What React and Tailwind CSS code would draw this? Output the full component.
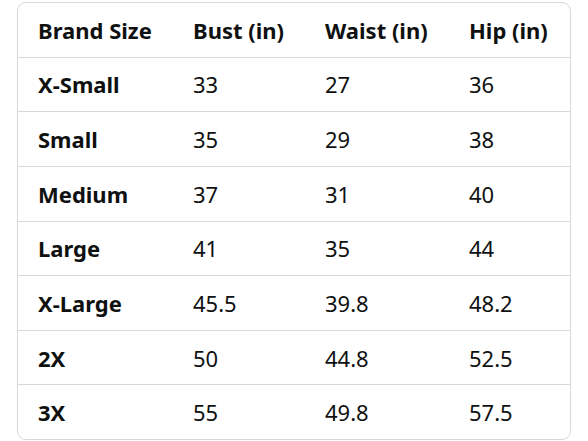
import React from "react";

const rows = [
  ["X-Small", "33", "27", "36"],
  ["Small", "35", "29", "38"],
  ["Medium", "37", "31", "40"],
  ["Large", "41", "35", "44"],
  ["X-Large", "45.5", "39.8", "48.2"],
  ["2X", "50", "44.8", "52.5"],
  ["3X", "55", "49.8", "57.5"],
];

export default function App() {
  return (
    <div className="w-[588px] h-[441px] bg-white pt-[2px] pl-[17px]" style={{ fontFamily: '"Noto Sans", "Open Sans", sans-serif' }}>
      <div className="w-[554px] h-[438px] border border-[#d5d9d9] rounded-[9px] flex flex-col text-[#0f1111] text-[22px] leading-none">
        <div className="flex-1 grid grid-cols-[155px_132px_144px_1fr] items-center pl-[20px] border-b border-[#d5d9d9] font-bold">
          <div>Brand Size</div>
          <div>Bust (in)</div>
          <div>Waist (in)</div>
          <div>Hip (in)</div>
        </div>
        {rows.map((r, i) => (
          <div
            key={r[0]}
            className={
              "flex-1 grid grid-cols-[155px_132px_144px_1fr] items-center pl-[20px] " +
              (i < rows.length - 1 ? "border-b border-[#d5d9d9]" : "")
            }
          >
            <div className="font-bold">{r[0]}</div>
            <div>{r[1]}</div>
            <div>{r[2]}</div>
            <div>{r[3]}</div>
          </div>
        ))}
      </div>
    </div>
  );
}
